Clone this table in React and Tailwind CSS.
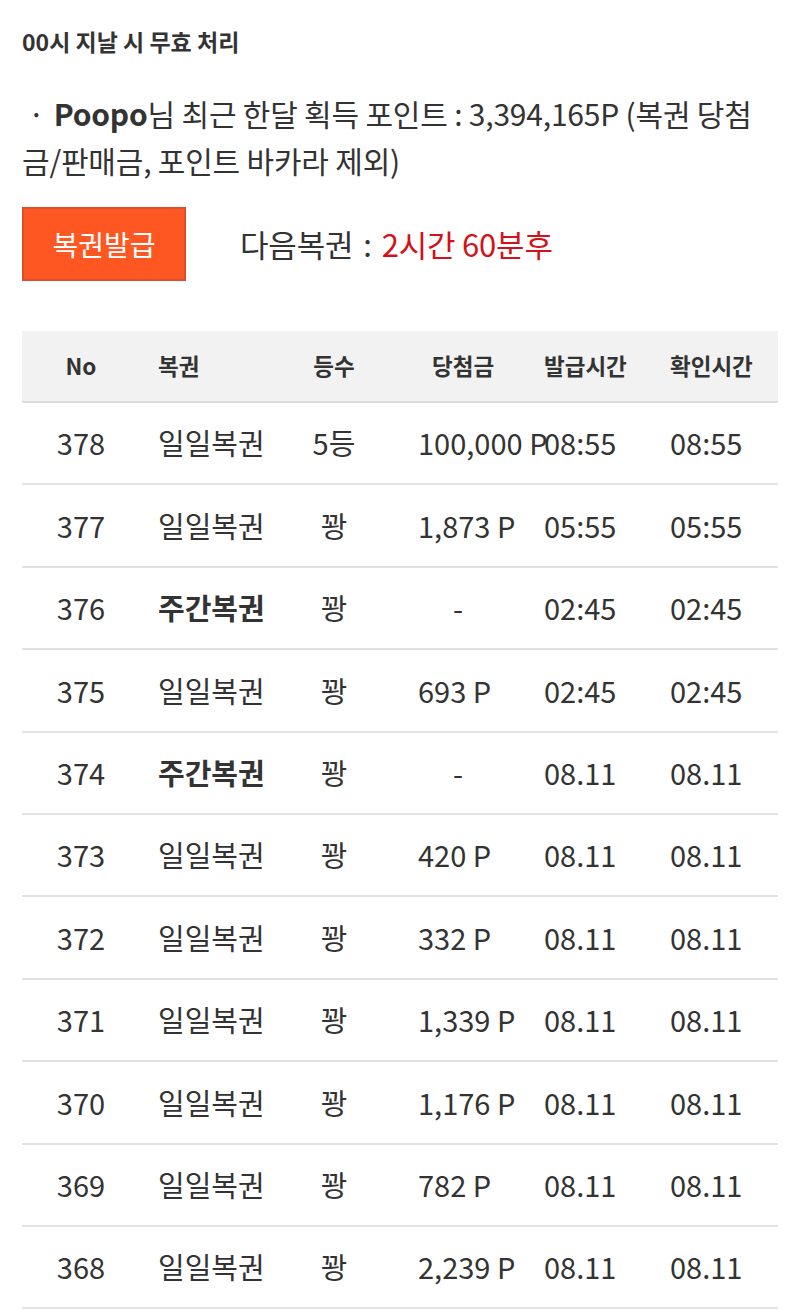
import React from 'react';

// 복권 발급 내역 (모바일 화면)
const rows = [
  { no: 378, name: '일일복권', rank: '5등', prize: '100,000 P', issued: '08:55', checked: '08:55' },
  { no: 377, name: '일일복권', rank: '꽝', prize: '1,873 P', issued: '05:55', checked: '05:55' },
  { no: 376, name: '주간복권', rank: '꽝', prize: '-', issued: '02:45', checked: '02:45', weekly: true },
  { no: 375, name: '일일복권', rank: '꽝', prize: '693 P', issued: '02:45', checked: '02:45' },
  { no: 374, name: '주간복권', rank: '꽝', prize: '-', issued: '08.11', checked: '08.11', weekly: true },
  { no: 373, name: '일일복권', rank: '꽝', prize: '420 P', issued: '08.11', checked: '08.11' },
  { no: 372, name: '일일복권', rank: '꽝', prize: '332 P', issued: '08.11', checked: '08.11' },
  { no: 371, name: '일일복권', rank: '꽝', prize: '1,339 P', issued: '08.11', checked: '08.11' },
  { no: 370, name: '일일복권', rank: '꽝', prize: '1,176 P', issued: '08.11', checked: '08.11' },
  { no: 369, name: '일일복권', rank: '꽝', prize: '782 P', issued: '08.11', checked: '08.11' },
  { no: 368, name: '일일복권', rank: '꽝', prize: '2,239 P', issued: '08.11', checked: '08.11' },
];

const cols = 'grid grid-cols-[118px_140px_108px_138px_126px_126px] items-center';

export default function App() {
  return (
    <div
      className="min-h-[1312px] bg-white px-[22px] text-[#333333]"
      style={{ fontFamily: '"Noto Sans CJK KR", "Noto Sans", sans-serif' }}
    >
      {/* 안내 */}
      <p className="pt-[26px] text-[23px] font-bold leading-[30px] text-[#333]">00시 지날 시 무효 처리</p>

      <p className="mt-[34px] text-[30px] leading-[47px] tracking-[-0.2px]">
        <span className="pl-[6px] pr-[9px]">·</span>
        <b className="font-bold">Poopo</b>님 최근 한달 획득 포인트 : 3,394,165P (복권 당첨
        <br />
        금/판매금, 포인트 바카라 제외)
      </p>

      {/* 발급 */}
      <div className="mt-[23px] flex items-center gap-[54px]">
        <button className="h-[74px] w-[164px] border-2 border-[#d9502a] bg-[#ff5722] text-[28px] text-white">
          복권발급
        </button>
        <p className="text-[31px] tracking-[-0.2px]">
          다음복권<span className="mx-[10px]">:</span>
          <span className="text-[#d3111b]">2시간 60분후</span>
        </p>
      </div>

      {/* 내역 */}
      <div className="mt-[50px]">
        <div className={`${cols} h-[72px] border-b-2 border-[#dcdcdc] bg-[#f2f2f2] text-[22.5px] font-bold`}>
          <div className="text-center">No</div>
          <div className="pl-[18px]">복권</div>
          <div className="text-center">등수</div>
          <div className="pl-[44px]">당첨금</div>
          <div className="pl-[18px]">발급시간</div>
          <div className="pl-[18px]">확인시간</div>
        </div>
        {rows.map((r) => (
          <div key={r.no} className={`${cols} h-[82.4px] border-b-2 border-[#e2e2e2] text-[29px] whitespace-nowrap`}>
            <div className="text-center">{r.no}</div>
            <div className={r.weekly ? 'pl-[18px] font-bold' : 'pl-[18px]'}>{r.name}</div>
            <div className="text-center">{r.rank}</div>
            <div className={r.prize === '-' ? 'pl-[65px]' : 'pl-[30px]'}>{r.prize}</div>
            <div className="pl-[18px]">{r.issued}</div>
            <div className="pl-[18px]">{r.checked}</div>
          </div>
        ))}
      </div>
    </div>
  );
}
